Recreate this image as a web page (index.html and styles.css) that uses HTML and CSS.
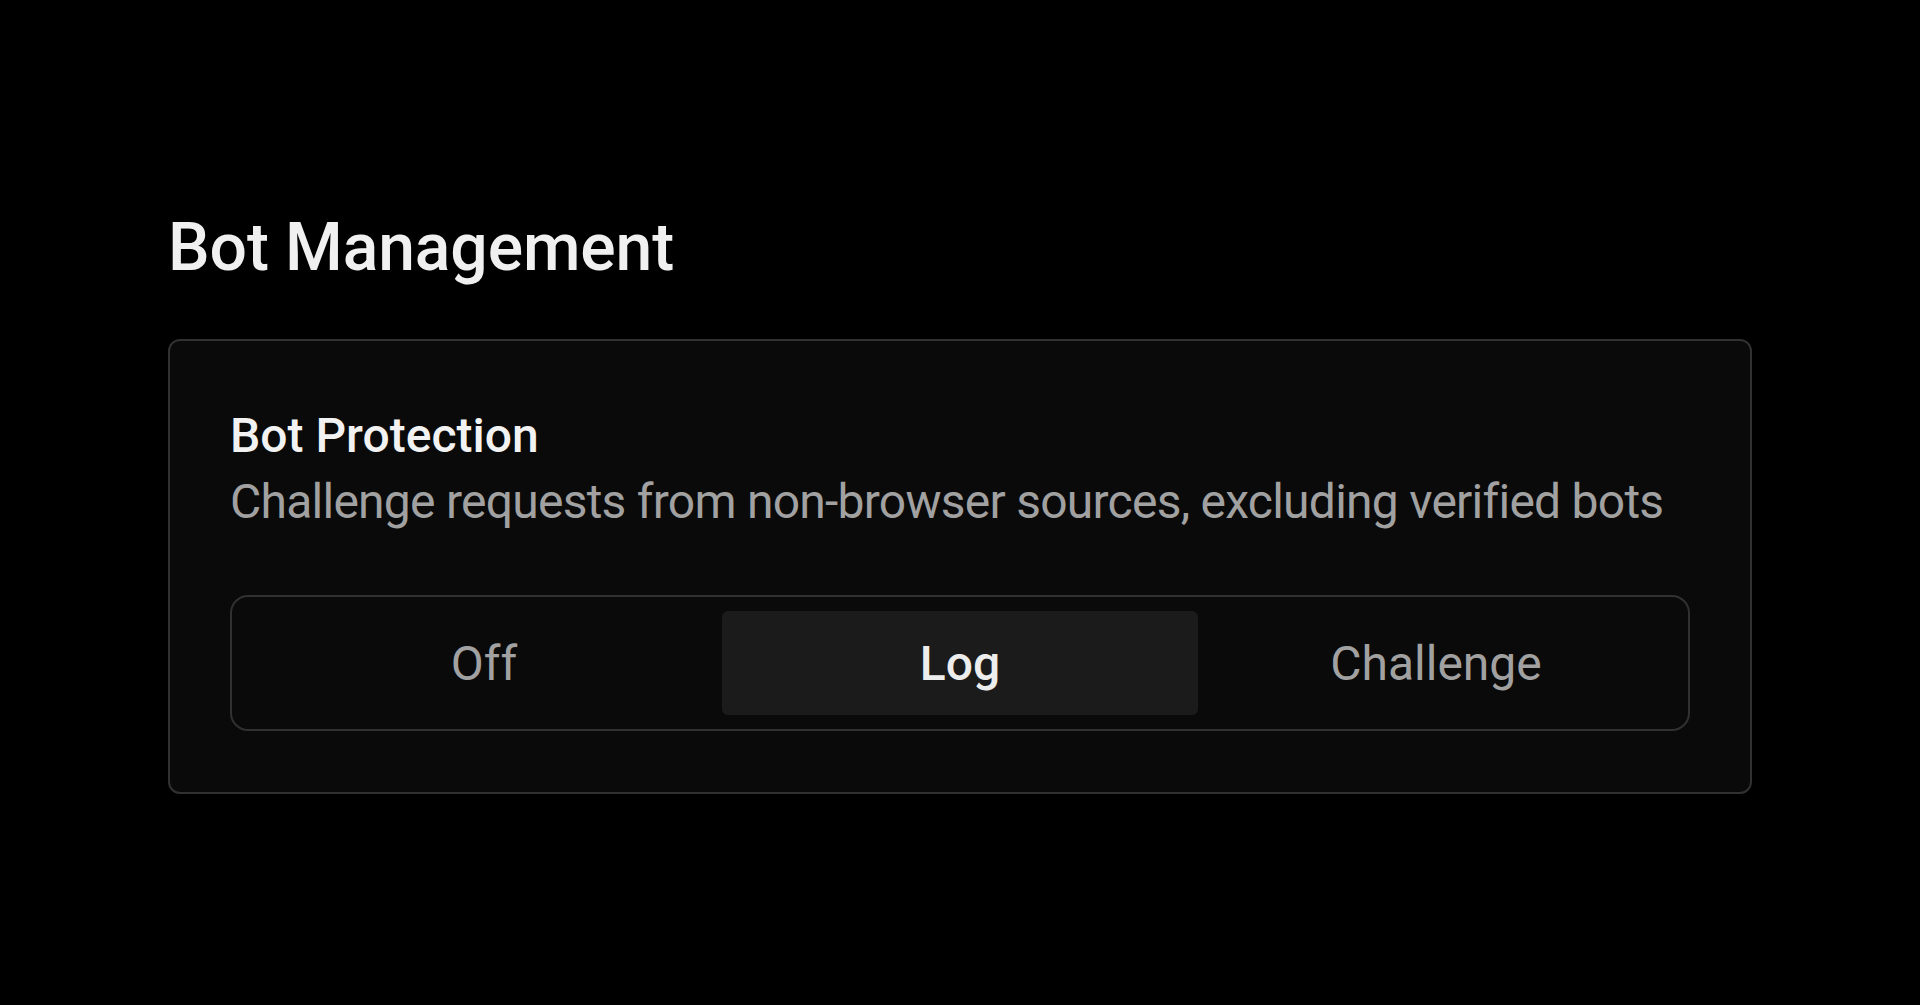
FILE: index.html
```html
<!DOCTYPE html>
<html lang="en">
<head>
<meta charset="utf-8">
<title>Bot Management</title>
<link rel="stylesheet" href="styles.css">
</head>
<body>
<main class="page">
  <h1 class="page-title">Bot Management</h1>
  <section class="card">
    <h2 class="card-title">Bot Protection</h2>
    <p class="card-desc">Challenge requests from non-browser sources, excluding verified bots</p>
    <div class="segmented" role="radiogroup">
      <button class="segment" role="radio" aria-checked="false">Off</button>
      <button class="segment is-active" role="radio" aria-checked="true">Log</button>
      <button class="segment" role="radio" aria-checked="false">Challenge</button>
    </div>
  </section>
</main>
</body>
</html>
```
FILE: styles.css
```css
* { box-sizing: border-box; }
html, body {
  margin: 0;
  background: #000;
  height: 100%;
}
body {
  font-family: Roboto, Inter, "Noto Sans", sans-serif;
  color: #ededed;
}
.page {
  padding: 206px 168px 0 168px;
}
.page-title {
  margin: 0;
  font-size: 66px;
  font-weight: 500;
  line-height: 84px;
  letter-spacing: -0.1px;
  color: #f0f0f0;
}
.card {
  margin-top: 49px;
  background: #0a0a0a;
  border: 2px solid #313131;
  border-radius: 12px;
  padding: 62px 60px 61px 60px;
}
.card-title {
  margin: 0;
  font-size: 48px;
  font-weight: 500;
  line-height: 66px;
  color: #f2f2f2;
}
.card-desc {
  margin: 0;
  font-size: 48px;
  font-weight: 400;
  line-height: 66px;
  letter-spacing: -0.75px;
  white-space: nowrap;
  color: #a1a1a1;
}
.segmented {
  margin-top: 60px;
  display: grid;
  grid-template-columns: 1fr 1fr 1fr;
  border: 2px solid #313131;
  border-radius: 18px;
  padding: 14px;
  background: #0a0a0a;
}
.segment {
  font: inherit;
  font-size: 48px;
  font-weight: 400;
  height: 104px;
  border: 0;
  border-radius: 6px;
  background: transparent;
  color: #a1a1a1;
  padding: 0;
}
.segment.is-active {
  background: #1b1b1b;
  color: #ededed;
  font-weight: 500;
}
```
